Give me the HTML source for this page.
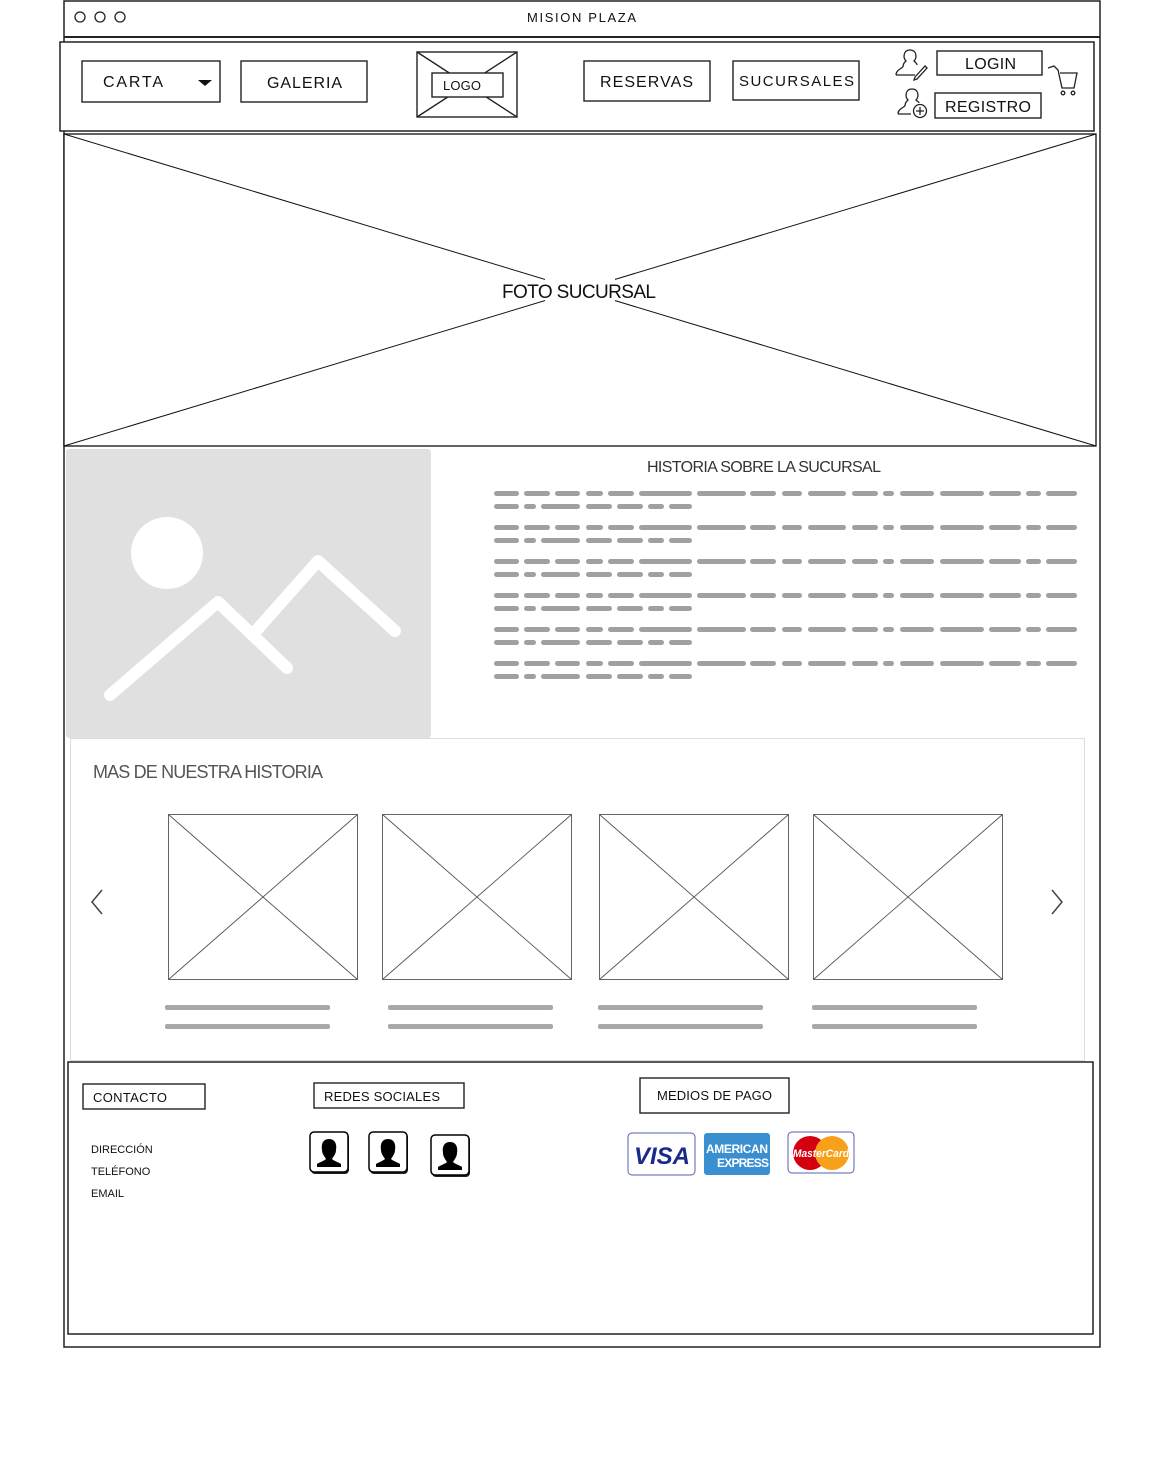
<!DOCTYPE html>
<html><head><meta charset="utf-8"><style>
html,body{margin:0;padding:0;background:#fff;width:1151px;height:1458px;overflow:hidden}
svg{display:block}
text{font-family:"Liberation Sans",sans-serif}
</style></head><body>
<svg width="1151" height="1458" viewBox="0 0 1151 1458" xmlns="http://www.w3.org/2000/svg">
<defs>
<g id="bars">
<g fill="#a0a0a0">
<rect x="494" y="0" width="25" height="5" rx="2.5"/><rect x="524" y="0" width="26" height="5" rx="2.5"/><rect x="555" y="0" width="25" height="5" rx="2.5"/><rect x="586" y="0" width="17" height="5" rx="2.5"/><rect x="608" y="0" width="26" height="5" rx="2.5"/><rect x="639" y="0" width="53" height="5" rx="2.5"/><rect x="697" y="0" width="49" height="5" rx="2.5"/><rect x="750" y="0" width="26" height="5" rx="2.5"/><rect x="782" y="0" width="20" height="5" rx="2.5"/><rect x="808" y="0" width="38" height="5" rx="2.5"/><rect x="852" y="0" width="26" height="5" rx="2.5"/><rect x="883" y="0" width="11" height="5" rx="2.5"/><rect x="900" y="0" width="34" height="5" rx="2.5"/><rect x="940" y="0" width="44" height="5" rx="2.5"/><rect x="989" y="0" width="32" height="5" rx="2.5"/><rect x="1026" y="0" width="15" height="5" rx="2.5"/><rect x="1046" y="0" width="31" height="5" rx="2.5"/>
<rect x="494" y="13" width="25" height="5" rx="2.5"/><rect x="524" y="13" width="12" height="5" rx="2.5"/><rect x="541" y="13" width="39" height="5" rx="2.5"/><rect x="586" y="13" width="26" height="5" rx="2.5"/><rect x="617" y="13" width="26" height="5" rx="2.5"/><rect x="648" y="13" width="16" height="5" rx="2.5"/><rect x="669" y="13" width="23" height="5" rx="2.5"/>
</g></g>
<g id="soc">
<rect x="1" y="1" width="38" height="41" rx="4" fill="#222"/>
<rect x="0" y="0" width="38" height="40" rx="4" fill="#fff" stroke="#000" stroke-width="1.5"/>
<path d="M19 7 c-6 0 -8 5 -7 11 c0 4 3 7 4 9 c-2 2 -6 3 -9 5 l0 3 l24 0 l0 -3 c-3 -2 -7 -3 -9 -5 c1 -2 4 -5 4 -9 c1 -6 -1 -11 -7 -11z" fill="#000"/>
</g>
</defs>

<rect x="64" y="1" width="1036" height="1346" fill="none" stroke="#222" stroke-width="1.5"/>
<line x1="64" y1="37" x2="1100" y2="37" stroke="#222" stroke-width="2"/>
<circle cx="80" cy="17" r="5" fill="none" stroke="#222" stroke-width="1.3"/>
<circle cx="100" cy="17" r="5" fill="none" stroke="#222" stroke-width="1.3"/>
<circle cx="120" cy="17" r="5" fill="none" stroke="#222" stroke-width="1.3"/>
<text x="527" y="22" font-size="13" fill="#111" textLength="109">MISION PLAZA</text>

<rect x="60" y="42" width="1034" height="89" fill="#fff" stroke="#222" stroke-width="1.5"/>
<g fill="none" stroke="#222" stroke-width="1.4">
<rect x="82" y="61" width="138" height="41"/>
<rect x="241" y="61" width="126" height="41"/>
<rect x="417" y="52" width="100" height="65"/>
<line x1="417" y1="52" x2="517" y2="117"/><line x1="517" y1="52" x2="417" y2="117"/>
<rect x="584" y="61" width="126" height="40"/>
<rect x="733" y="61" width="126" height="39"/>
<rect x="937" y="51" width="105" height="24"/>
<rect x="935" y="93" width="106" height="25"/>
</g>
<rect x="432" y="73" width="71" height="24" fill="#fff" stroke="#222" stroke-width="1.4"/>
<text x="103" y="87" font-size="16" fill="#111" textLength="60">CARTA</text>
<path d="M198 80 l14 0 l-7 6z" fill="#111"/>
<text x="267" y="88" font-size="16" fill="#111" textLength="75">GALERIA</text>
<text x="443" y="90" font-size="13" fill="#111" textLength="38">LOGO</text>
<text x="600" y="87" font-size="16" fill="#111" textLength="93">RESERVAS</text>
<text x="739" y="86" font-size="15" fill="#111" textLength="115">SUCURSALES</text>
<text x="965" y="69" font-size="16" fill="#111" textLength="51">LOGIN</text>
<text x="945" y="112" font-size="16" fill="#111" textLength="86">REGISTRO</text>
<g fill="none" stroke="#222" stroke-width="1.3">
<path d="M903 67 c0-4 2-5 3-6 c-3-3-3-11 4-11 c7 0 7 8 4 11 c1 1 3 2 3 4 M896 75 c0-4 4-6 7-8 M896 75 l19 0"/>
<path d="M915 77 l10-11 l2 2 l-10 11 l-3 1z"/>
<path d="M905 106 c0-4 2-5 3-6 c-3-3-3-11 4-11 c7 0 7 8 4 11 c1 1 3 2 3 3 M898 114 c0-4 4-6 7-8 M898 114 l13 0"/>
<circle cx="920" cy="111" r="6.5"/>
<path d="M920 107 v8 M916 111 h8"/>
<path d="M1048 68 l6 -2 l4 4 l4 18 l12 0 l3 -15 l-17 0"/>
<circle cx="1063" cy="93" r="1.8"/><circle cx="1073" cy="93" r="1.8"/>
</g>

<rect x="64" y="134" width="1032" height="312" fill="#fff" stroke="#111" stroke-width="1.3"/>
<line x1="64" y1="134" x2="1096" y2="446" stroke="#111" stroke-width="1"/>
<line x1="1096" y1="134" x2="64" y2="446" stroke="#111" stroke-width="1"/>
<rect x="545" y="276" width="70" height="30" fill="#fff"/>
<text x="502" y="298" font-size="19" fill="#111" textLength="154">FOTO SUCURSAL</text>

<rect x="66" y="449" width="365" height="289" rx="3" fill="#e0e0e0"/>
<circle cx="167" cy="553" r="36" fill="#fff"/>
<polyline points="110,695 218,602 287,668" fill="none" stroke="#fff" stroke-width="12" stroke-linecap="round" stroke-linejoin="round"/>
<polyline points="255,632 318,561 395,631" fill="none" stroke="#fff" stroke-width="12" stroke-linecap="round" stroke-linejoin="round"/>

<text x="647" y="472" font-size="16" fill="#333" textLength="234">HISTORIA SOBRE LA SUCURSAL</text>
<use href="#bars" y="491"/>
<use href="#bars" y="525"/>
<use href="#bars" y="559"/>
<use href="#bars" y="593"/>
<use href="#bars" y="627"/>
<use href="#bars" y="661"/>

<rect x="70.5" y="738.5" width="1014" height="322" fill="none" stroke="#ddd" stroke-width="1"/>
<text x="93" y="778" font-size="18" fill="#555" textLength="230">MAS DE NUESTRA HISTORIA</text>
<path d="M102 890 l-10 12 l10 12" fill="none" stroke="#444" stroke-width="1.5"/>
<path d="M1052 890 l10 12 l-10 12" fill="none" stroke="#444" stroke-width="1.5"/>
<g fill="none" stroke="#555" stroke-width="0.9">
<rect x="168.5" y="814.5" width="189" height="165"/><line x1="168.5" y1="814.5" x2="357.5" y2="979.5"/><line x1="357.5" y1="814.5" x2="168.5" y2="979.5"/>
<rect x="382.5" y="814.5" width="189" height="165"/><line x1="382.5" y1="814.5" x2="571.5" y2="979.5"/><line x1="571.5" y1="814.5" x2="382.5" y2="979.5"/>
<rect x="599.5" y="814.5" width="189" height="165"/><line x1="599.5" y1="814.5" x2="788.5" y2="979.5"/><line x1="788.5" y1="814.5" x2="599.5" y2="979.5"/>
<rect x="813.5" y="814.5" width="189" height="165"/><line x1="813.5" y1="814.5" x2="1002.5" y2="979.5"/><line x1="1002.5" y1="814.5" x2="813.5" y2="979.5"/>
</g>
<g fill="#a8a8a8">
<rect x="165" y="1005" width="165" height="5" rx="2"/><rect x="165" y="1024" width="165" height="5" rx="2"/>
<rect x="388" y="1005" width="165" height="5" rx="2"/><rect x="388" y="1024" width="165" height="5" rx="2"/>
<rect x="598" y="1005" width="165" height="5" rx="2"/><rect x="598" y="1024" width="165" height="5" rx="2"/>
<rect x="812" y="1005" width="165" height="5" rx="2"/><rect x="812" y="1024" width="165" height="5" rx="2"/>
</g>

<rect x="68" y="1062" width="1025" height="272" fill="none" stroke="#222" stroke-width="1.5"/>
<g fill="none" stroke="#222" stroke-width="1.4">
<rect x="83" y="1084" width="122" height="25"/>
<rect x="314" y="1083" width="150" height="25"/>
<rect x="640" y="1078" width="149" height="35"/>
</g>
<text x="93" y="1102" font-size="13" fill="#111" textLength="74">CONTACTO</text>
<text x="324" y="1101" font-size="13" fill="#111" textLength="116">REDES SOCIALES</text>
<text x="657" y="1100" font-size="13" fill="#111" textLength="115">MEDIOS DE PAGO</text>
<text x="91" y="1153" font-size="11" fill="#111">DIRECCIÓN</text>
<text x="91" y="1175" font-size="11" fill="#111">TELÉFONO</text>
<text x="91" y="1197" font-size="11" fill="#111">EMAIL</text>
<use href="#soc" x="310" y="1132"/>
<use href="#soc" x="369" y="1132"/>
<use href="#soc" x="431" y="1135"/>

<rect x="628" y="1133" width="67" height="42" rx="4" fill="#fff" stroke="#5560b0" stroke-width="1"/>
<text x="662" y="1164" font-size="24" font-weight="bold" font-style="italic" text-anchor="middle" fill="#1a2a8a">VISA</text>
<rect x="704" y="1133" width="66" height="42" rx="3" fill="#3a8fd0"/>
<text x="737" y="1153" font-size="12" font-weight="bold" text-anchor="middle" fill="#fff" textLength="62">AMERICAN</text>
<text x="743" y="1167" font-size="12" font-weight="bold" text-anchor="middle" fill="#fff" textLength="52">EXPRESS</text>
<rect x="788" y="1132" width="66" height="41" rx="4" fill="#fff" stroke="#5560b0" stroke-width="1"/>
<circle cx="810" cy="1153" r="17" fill="#d40010"/>
<circle cx="832" cy="1153" r="17" fill="#f8a01a"/>
<text x="821" y="1157" font-size="11" font-weight="bold" font-style="italic" text-anchor="middle" fill="#fff" textLength="56" lengthAdjust="spacingAndGlyphs">MasterCard</text>
</svg>
</body></html>
